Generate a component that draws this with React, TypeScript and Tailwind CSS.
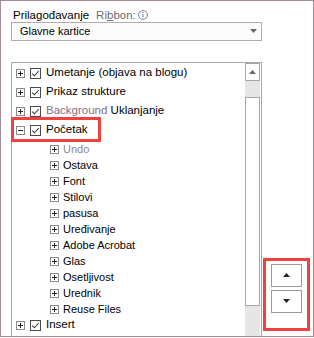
const font = "font-['Liberation_Sans',Arial,sans-serif]"

function PlusBox({ open = false }: { open?: boolean }) {
  return (
    <svg width="9" height="9" viewBox="0 0 9 9" className="shrink-0">
      <rect x="0.5" y="0.5" width="8" height="8" fill="#fff" stroke="#8a8a8a" />
      <path d="M2 4.5H7" stroke="#222" />
      {!open && <path d="M4.5 2V7" stroke="#222" />}
    </svg>
  )
}

function Check() {
  return (
    <svg width="11" height="11" viewBox="0 0 11 11" className="shrink-0">
      <rect x="0.5" y="0.5" width="10" height="10" fill="#fff" stroke="#4a4a4a" />
      <path d="M2.2 5.6L4.4 7.8L8.8 3" fill="none" stroke="#3a3a3a" strokeWidth="1.1" />
    </svg>
  )
}

function TopRow({ children, open = false, className = '' }: { children: React.ReactNode; open?: boolean; className?: string }) {
  return (
    <div className={`h-[19px] flex items-center ${className}`}>
      <PlusBox open={open} />
      <span className="ml-[5px]"><Check /></span>
      <span className="ml-[5px] whitespace-nowrap text-black text-[11.5px]">{children}</span>
    </div>
  )
}

function SubRow({ label, muted = false }: { label: string; muted?: boolean }) {
  return (
    <div className="h-[16px] flex items-center pl-[34px]">
      <PlusBox />
      <span className={`ml-[4px] whitespace-nowrap ${muted ? 'text-[#8a8a8a]' : 'text-black'}`}>{label}</span>
    </div>
  )
}

function Tri({ up = false, color = '#222' }: { up?: boolean; color?: string }) {
  return (
    <svg width="7" height="4" viewBox="0 0 7 4">
      <path d={up ? 'M0 4H7L3.5 0Z' : 'M0 0H7L3.5 4Z'} fill={color} />
    </svg>
  )
}

const subItems = [
  'Ostava', 'Font', 'Stilovi', 'pasusa', 'Uređivanje', 'Adobe Acrobat',
  'Glas', 'Osetljivost', 'Urednik', 'Reuse Files',
]

export default function App() {
  return (
    <div className={`w-[314px] h-[338px] bg-white overflow-hidden text-[11px] ${font}`}>
      <div className="h-[337px] border border-[#a08b9c] pl-[10px] flex flex-col overflow-hidden">
        <div className="h-[23px] pt-[7px] pl-[2px] flex items-start leading-[14px]">
          <span className="text-black text-[11.5px]">Prilagođavanje</span>
          <span className="ml-[7px] text-[#6b6b6b] text-[11.5px]">Ri<span className="underline">b</span>bon:</span>
          <svg width="10" height="10" viewBox="0 0 10 10" className="ml-[2px] mt-[2px]">
            <circle cx="5" cy="5" r="4.4" fill="none" stroke="#7384a3" />
            <path d="M5 4.2V7.6" stroke="#7384a3" strokeWidth="1.1" />
            <circle cx="5" cy="2.7" r="0.65" fill="#7384a3" />
          </svg>
        </div>

        <div className="w-[251px] h-[21px] border border-[#adadad] bg-[#fcfcfc] flex items-center justify-between pl-[8px] pr-[4px]">
          <span className="text-black">Glavne kartice</span>
          <Tri color="#666" />
        </div>

        <div className="flex mt-[21px]">
          <div className="w-[251px] h-[290px] border border-[#a8a8a8] flex shrink-0">
            <div className="flex-1 pl-[4px] pt-[1px]">
              <TopRow>Umetanje (objava na blogu)</TopRow>
              <TopRow>Prikaz strukture</TopRow>
              <TopRow>
                <span className="text-[#7d7088]">Background</span> Uklanjanje
              </TopRow>
              <div className="relative">
                <TopRow open>Početak</TopRow>
                <div className="absolute -left-[5px] -top-[4px] w-[90px] h-[25px] border-[3px] border-[#f0403f]"></div>
              </div>
              <div className="mt-[2px]">
                <SubRow label="Undo" muted />
                {subItems.map((s) => (
                  <SubRow key={s} label={s} />
                ))}
              </div>
              <TopRow className="-mt-[2px]">Insert</TopRow>
            </div>
            <div className="w-[15px] mr-[1px] flex flex-col">
              <div className="h-[18px] border border-[#a6a6a6] bg-white flex items-center justify-center">
                <Tri up color="#666" />
              </div>
              <div className="h-[16px] bg-[#e6e6e6]"></div>
              <div className="h-[209px] border border-[#a6a6a6] bg-white"></div>
              <div className="flex-1 bg-[#e6e6e6]"></div>
            </div>
          </div>

          <div className="ml-[1px] mt-[196px] w-[47px] h-[73px] border-[3px] border-[#f0403f] pl-[5px] pt-[3px] flex flex-col gap-[3px] shrink-0">
            <button className="w-[31px] h-[23px] border border-[#9a9a9a] bg-white flex items-center justify-center">
              <Tri up />
            </button>
            <button className="w-[31px] h-[23px] border border-[#9a9a9a] bg-white flex items-center justify-center">
              <Tri />
            </button>
          </div>
        </div>
      </div>
    </div>
  )
}
